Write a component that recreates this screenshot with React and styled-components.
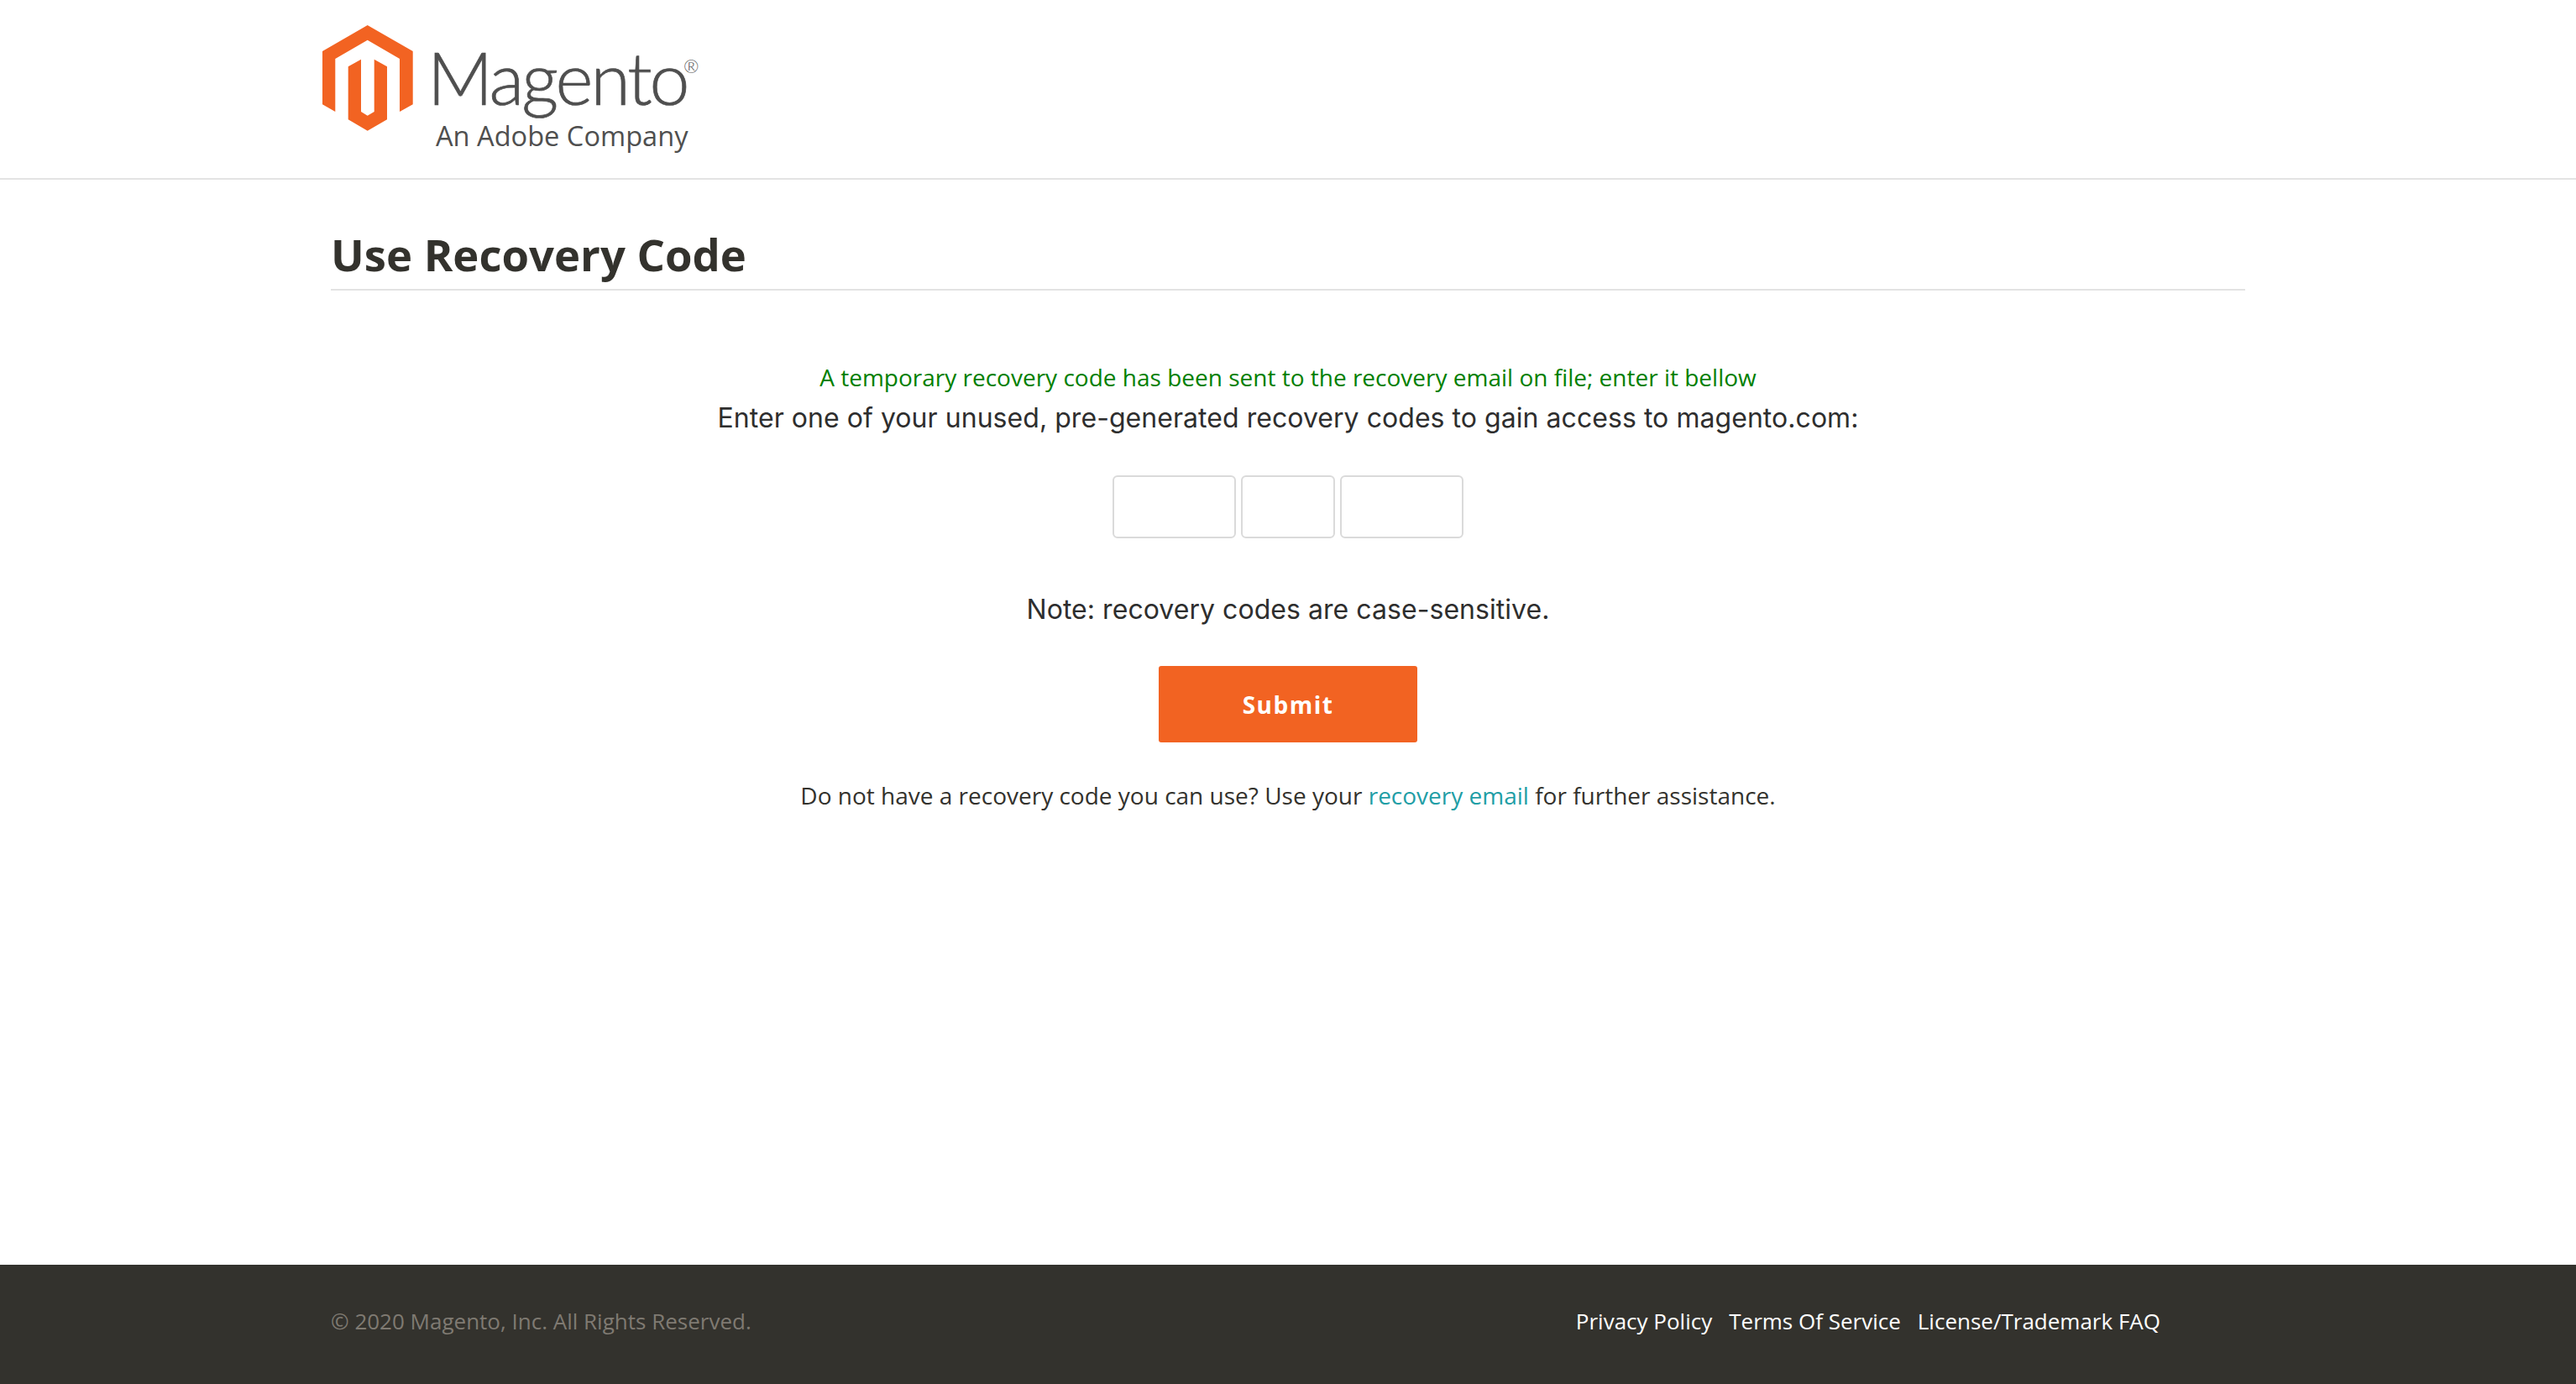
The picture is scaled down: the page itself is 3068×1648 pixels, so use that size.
import React from "react";
import styled, { createGlobalStyle } from "styled-components";

const GlobalStyle = createGlobalStyle`
  body {
    margin: 0;
    background: #fff;
    font-family: "Open Sans", "Noto Sans", sans-serif;
    color: #33322d;
  }
`;

const Page = styled.div`
  min-height: 1648px;
  display: flex;
  flex-direction: column;
`;

const Header = styled.header`
  border-bottom: 2px solid #e3e3e3;
  padding: 30px 0 0 384px;
  height: 182px;
  display: flex;
  align-items: flex-start;
  gap: 27px;
`;

const LogoMark = styled.svg`
  width: 108px;
  height: 126px;
  flex: none;
`;

const LogoText = styled.div`
  display: flex;
  flex-direction: column;
  width: 320px;
  padding-top: 12px;
`;

const LogoName = styled.span`
  font-family: Lato, sans-serif;
  font-weight: 300;
  font-size: 86px;
  line-height: 100px;
  letter-spacing: -3px;
  margin-left: -10px;
  color: #4f4f4f;
  -webkit-text-stroke: 0.7px #4f4f4f;
  white-space: nowrap;
  position: relative;
`;

const Registered = styled.sup`
  position: absolute;
  font-size: 22px;
  line-height: 22px;
  letter-spacing: 0;
  -webkit-text-stroke: 0;
  top: 26px;
  left: 305px;
`;

const LogoTag = styled.span`
  font-family: "Open Sans", sans-serif;
  font-size: 32.6px;
  line-height: 40px;
  color: #4f4f4f;
  white-space: nowrap;
`;

const Main = styled.main`
  flex: 1;
  width: 2280px;
  margin: 0 auto;
  padding-top: 58px;
`;

const Title = styled.h1`
  margin: 0;
  font-size: 52.6px;
  line-height: 72px;
  font-weight: 700;
  color: #33322d;
  border-bottom: 2px solid #e3e3e3;
  padding-bottom: 0;

  span {
    position: relative;
    top: -5px;
  }
`;

const Form = styled.form`
  display: flex;
  flex-direction: column;
  align-items: center;
  padding-top: 79px;
`;

const Notice = styled.p`
  margin: 0;
  font-size: 28px;
  line-height: 48px;
  color: #008000;
`;

const Lead = styled.p`
  margin: 0;
  font-family: Inter, sans-serif;
  font-size: 32px;
  letter-spacing: 0.05px;
  line-height: 50px;
  color: #2e2e2e;
  margin-top: ${(p) => p.$top || 0}px;
`;

const CodeRow = styled.div`
  display: flex;
  gap: 6px;
  margin-top: 43px;
`;

const CodeInput = styled.input`
  width: ${(p) => p.$w}px;
  height: 75px;
  box-sizing: border-box;
  border: 2px solid #dadada;
  border-radius: 6px;
  background: #fff;
  padding: 0;
  outline: none;
`;

const SubmitButton = styled.button`
  width: 308px;
  height: 91px;
  margin-top: 42px;
  border: 0;
  border-radius: 3px;
  background: #f26322;
  color: #fff;
  font-family: "Open Sans", sans-serif;
  font-size: 28px;
  font-weight: 700;
  letter-spacing: 1.5px;
`;

const Help = styled.p`
  margin: 44px 0 0;
  font-size: 28px;
  line-height: 38px;
  color: #33322d;
`;

const TealLink = styled.a`
  color: #1f9ea6;
  text-decoration: none;
`;

const Footer = styled.footer`
  height: 134px;
  background: #33322d;
  display: flex;
  align-items: center;
  justify-content: space-between;
  padding: 0 495px 8px 394px;
  font-size: 26px;
`;

const Copyright = styled.span`
  color: #7f7a72;
`;

const FooterLinks = styled.nav`
  display: flex;
  gap: 20px;
`;

const FooterLink = styled.a`
  color: #fff;
  text-decoration: none;
`;

export default function App() {
  return (
    <Page>
      <GlobalStyle />
      <Header>
        <LogoMark viewBox="0 0 108 126">
          <path
            fill="#f26322"
            d="M53.7 0 107.7 31V94.3L92 103V40L53.7 17.7 15.3 40V103L0 94.3V31Z"
          />
          <path
            fill="#f26322"
            d="M30.7 49.3 46 40.7V103L53.7 107.7 61.7 103V40.7L77 49.3V112.3L53.7 125.7 30.7 112.3Z"
          />
        </LogoMark>
        <LogoText>
          <LogoName>
            Magento<Registered>®</Registered>
          </LogoName>
          <LogoTag>An Adobe Company</LogoTag>
        </LogoText>
      </Header>
      <Main>
        <Title>
          <span>Use Recovery Code</span>
        </Title>
        <Form onSubmit={(e) => e.preventDefault()}>
          <Notice>
            A temporary recovery code has been sent to the recovery email on file; enter it bellow
          </Notice>
          <Lead>Enter one of your unused, pre-generated recovery codes to gain access to magento.com:</Lead>
          <CodeRow>
            <CodeInput $w={147} />
            <CodeInput $w={112} />
            <CodeInput $w={147} />
          </CodeRow>
          <Lead $top={60}>Note: recovery codes are case-sensitive.</Lead>
          <SubmitButton>Submit</SubmitButton>
          <Help>
            Do not have a recovery code you can use? Use your <TealLink href="#">recovery email</TealLink> for further assistance.
          </Help>
        </Form>
      </Main>
      <Footer>
        <Copyright>© 2020 Magento, Inc. All Rights Reserved.</Copyright>
        <FooterLinks>
          <FooterLink href="#">Privacy Policy</FooterLink>
          <FooterLink href="#">Terms Of Service</FooterLink>
          <FooterLink href="#">License/Trademark FAQ</FooterLink>
        </FooterLinks>
      </Footer>
    </Page>
  );
}
